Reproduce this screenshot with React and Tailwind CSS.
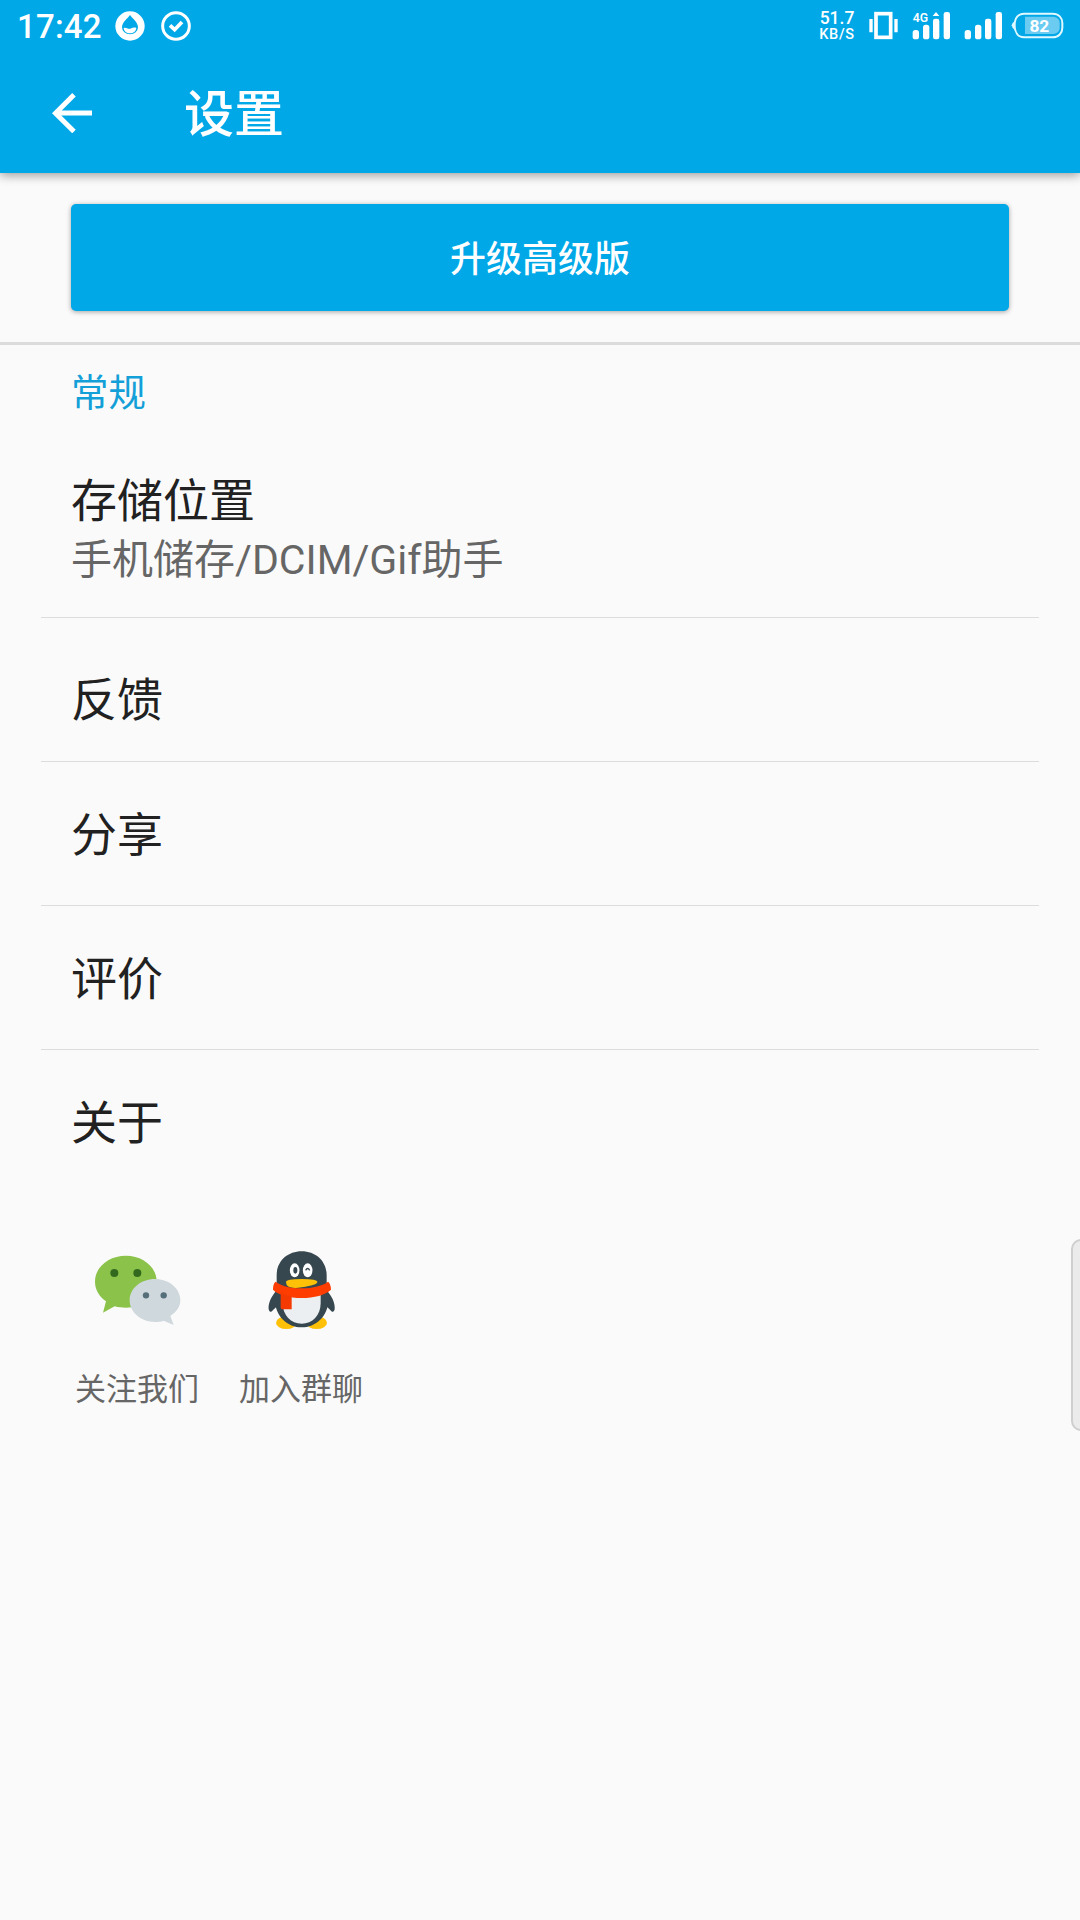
import clsx from 'clsx';

const settings = [
    { title: '存储位置', summary: '手机储存/DCIM/Gif助手', row: 'h-[205px] pt-[55px]' },
    { title: '反馈', row: 'h-[144px] pt-[49px]' },
    { title: '分享', row: 'h-[144px] pt-[40px]' },
    { title: '评价', row: 'h-[144px] pt-[40px]' },
    { title: '关于', row: 'h-[144px] pt-[40px]' },
];

const StatusBar = () => (
    <div className="flex h-[52px] items-start justify-between pl-[17px] pr-[16px] text-white">
        <div className="flex h-[52px] items-center">
            <span className="w-[86px] pt-px text-[33px] leading-[52px] font-medium tracking-[0.2px]">17:42</span>
            <svg className="ml-[12px] h-[30px] w-[30px]" viewBox="0 0 90 90">
                <circle cx="45" cy="45" r="44" fill="#fff" />
                <path d="M45 12C38 22 21 34 21 49a24 21 0 0 0 48 0C69 34 52 22 45 12z" fill="#01a8e8" />
                <path d="M26 51c7-3 13 4 20 2 6-2 12-5 18-2-1 10-9 16-19 16S27 61 26 51z" fill="#fff" />
            </svg>
            <svg className="ml-[16px] h-[30px] w-[30px]" viewBox="0 0 90 90" fill="none" stroke="#fff">
                <circle cx="45" cy="45" r="40" strokeWidth="9" />
                <path d="M27 43l14 13 22-23" strokeWidth="11" />
            </svg>
        </div>
        <div className="flex h-[52px] items-start">
            <div className="mt-[8px] mr-[12px] w-[38px] text-center font-medium whitespace-nowrap">
                <div className="text-[17.5px] leading-[20px]">51.7</div>
                <div className="-mt-px text-[14.5px] leading-[16px] tracking-[0.7px]">KB/S</div>
            </div>
            <svg className="h-[52px] w-[32px]" viewBox="204 0 96 156" fill="#fff">
                <rect x="228" y="41" width="44" height="71" fill="none" stroke="#fff" strokeWidth="11" />
                <path d="M208 57h10v40h-10zM283 57h10v40h-10z" />
            </svg>
            <svg className="ml-[12px] h-[52px] w-[40px]" viewBox="336 0 120 156" fill="#fff">
                <text x="338" y="65" fontSize="38" fontWeight="600" textLength="46" lengthAdjust="spacingAndGlyphs">4G</text>
                <rect x="338" y="90" width="19" height="28" rx="8" />
                <rect x="369" y="74" width="19" height="44" rx="8" />
                <rect x="399" y="56" width="19" height="62" rx="7" />
                <path d="M398 48l10-12 10 12z" />
                <rect x="431" y="36" width="19" height="82" rx="7" />
            </svg>
            <svg className="ml-[12px] h-[52px] w-[40px]" viewBox="492 0 120 156" fill="#fff">
                <rect x="494" y="90" width="19" height="28" rx="8" />
                <rect x="525" y="74" width="19" height="44" rx="8" />
                <rect x="555" y="56" width="19" height="62" rx="7" />
                <rect x="587" y="36" width="19" height="82" rx="7" />
            </svg>
            <svg className="ml-[6px] h-[52px] w-[54px]" viewBox="630 0 162 156">
                <path d="M645 63q-10 6-10 13t10 14z" fill="#e0f8ff" />
                <path d="M672 41h86c18 0 29 12 29 28v14c0 16-11 29-29 29h-86c-18 0-28-15-28-36s10-35 28-35z" fill="none" stroke="#e0f8ff" strokeWidth="6" />
                <path d="M675 50h81c15 0 23 8 23 19v14c0 11-8 19-23 19h-81z" fill="#6ccbf1" />
                <text x="718" y="95" fill="#fff" fontSize="52" fontWeight="700" textAnchor="middle">82</text>
            </svg>
        </div>
    </div>
);

const WeChatIcon = () => (
    <svg className="ml-[15px] h-[90px] w-[100px]" viewBox="0 0 300 270">
        <path d="M108 32C56 32 15 66 15 110c0 24 13 45 33 59L39 203l35-19c11 3 22 4 34 4 51 0 92-34 92-78S159 32 108 32z" fill="#8bc34a" />
        <circle cx="73" cy="84" r="12" fill="#33691e" />
        <circle cx="142" cy="84" r="12" fill="#33691e" />
        <path d="M195 102c-42 0-76 28-76 64s34 65 76 65c9 0 18-1 26-4l30 13-10-27c19-12 30-28 30-47 0-36-34-64-76-64z" fill="#cfd8dc" />
        <circle cx="168" cy="151" r="9.500" fill="#546e7a" />
        <circle cx="221" cy="151" r="9.500" fill="#546e7a" />
    </svg>
);

const QQIcon = () => (
    <svg className="ml-[16px] h-[90px] w-[95px]" viewBox="0 0 285 270">
        <ellipse cx="94" cy="233" rx="31" ry="19" fill="#ffc107" />
        <ellipse cx="185" cy="233" rx="31" ry="19" fill="#ffc107" />
        <path d="M64 138c-14 14-25 36-23 55 2 11 9 8 14 1l24-22zM216 138c14 14 25 36 23 55-2 11-9 8-14 1l-24-22z" fill="#37474f" />
        <path d="M140 19c-44 0-75 31-75 72v35c-4 10-5 22-5 38 0 50 38 83 80 83s80-33 80-83c0-16-1-28-5-38V91c0-41-31-72-75-72z" fill="#37474f" />
        <path d="M83 140h114v34c0 38-25 62-57 62s-57-24-57-62z" fill="#eceff1" />
        <ellipse cx="119" cy="76" rx="14.500" ry="21" fill="#fff" />
        <ellipse cx="158" cy="76" rx="14.500" ry="21" fill="#fff" />
        <ellipse cx="121" cy="76" rx="6" ry="10" fill="#37474f" />
        <path d="M152 76q6-11 12 0" fill="none" stroke="#37474f" strokeWidth="4" />
        <path d="M93 111q0-9 47-9t47 9-47 16-47-16z" fill="#ffc107" />
        <path d="M62 110c16 13 45 20 78 20s64-8 79-20c5 3 9 12 9 24-18 16-50 25-88 25s-70-9-86-25c0-13 3-21 8-24z" fill="#ff3d00" />
        <path d="M77 143l33 12v38H82q-5 0-5-6z" fill="#f43a00" />
    </svg>
);

const Social = ({ icon, label }) => (
    <div className="w-[124px]">
        {icon}
        <div className="mt-[32px] text-center text-[31px] leading-[46px] text-[#666]">{label}</div>
    </div>
);

const App = () => (
    <div className="relative h-[1920px] w-[1080px] overflow-hidden bg-[#fafafa] font-[Roboto,'Noto_Sans_CJK_SC',sans-serif]">
        <header className="h-[173px] bg-[#01a8e8] shadow-[0_2px_10px_rgba(0,0,0,0.4)]">
            <StatusBar />
            <div className="flex h-[121px] items-center pl-[52px] text-white">
                <svg className="h-[40px] w-[40px]" viewBox="0 0 40 40" fill="none" stroke="#fff" strokeWidth="5">
                    <path d="M40 20H4M22 1.800L3.500 20.200 22 38.500" />
                </svg>
                <h1 className="ml-[92px] pt-[6px] text-[50px] font-medium">设置</h1>
            </div>
        </header>

        <div className="h-[172px] border-b-[3px] border-[#dcdcdc] px-[71px] pt-[31px]">
            <button className="h-[107px] w-full rounded-[5px] bg-[#01a8e8] pt-[4px] text-[36px] font-medium text-white shadow-[0_1px_5px_rgba(0,0,0,0.35)]">
                升级高级版
            </button>
        </div>

        <h2 className="h-[68px] pt-[21px] pl-[71px] text-[37.5px] leading-[54px] text-[#139fd7]">常规</h2>

        <div className="px-[41px]">
            {settings.map((item, i) => (
                <div key={item.title} className={clsx('pl-[30px]', item.row, i < settings.length - 1 && 'border-b border-[#dcdcdc]')}>
                    <div className="text-[46px] leading-[66px] text-[#212121]">{item.title}</div>
                    {item.summary && (
                        <div className="text-[41px] leading-[52px] text-[#666]">{item.summary}</div>
                    )}
                </div>
            ))}
        </div>

        <div className="mt-[51px] flex gap-[40px] pl-[75px]">
            <Social icon={<WeChatIcon />} label="关注我们" />
            <Social icon={<QQIcon />} label="加入群聊" />
        </div>

        {/* edge panel handle */}
        <div className="absolute top-[1239px] -right-[12px] h-[192px] w-[21px] rounded-[10px] border-2 border-[#cfcfcf] bg-[#ebebeb]" />
    </div>
);

export default App;
